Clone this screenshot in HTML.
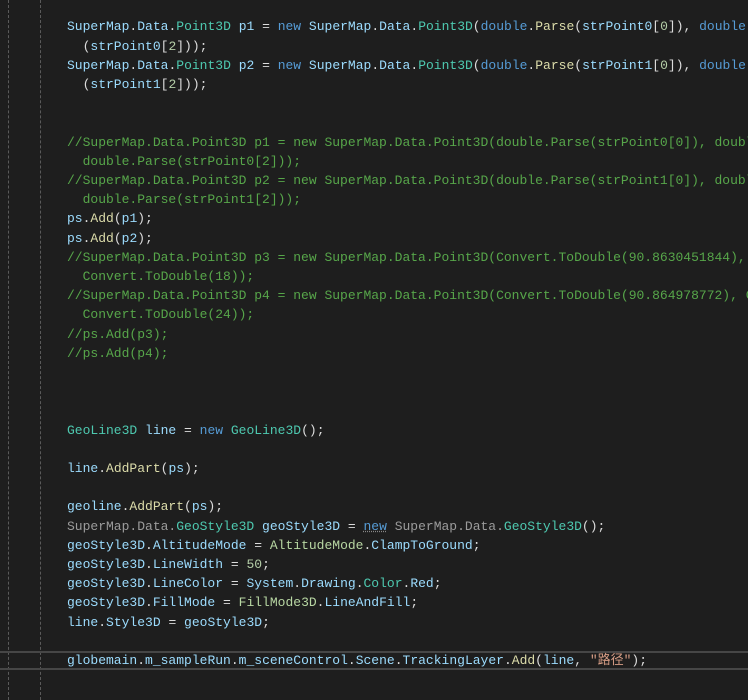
<!DOCTYPE html>
<html><head><meta charset="utf-8"><style>
html,body{margin:0;padding:0;background:#1e1e1e;width:748px;height:700px;overflow:hidden;position:relative}
.g{position:absolute;top:0;height:700px;width:0;border-left:1px dashed #5a5a5a}
.cur{position:absolute;left:0;width:748px;top:651px;height:15px;border-top:2px solid #464646;border-bottom:2px solid #464646}
.l{position:absolute;left:67px;width:681px;overflow:hidden;white-space:pre;font-family:"Liberation Mono","Noto Sans CJK SC",monospace;font-size:13px;line-height:19.2px;height:19.2px;color:#dcdcdc}
.v{color:#9cdcfe}.t{color:#4ec9b0}.k{color:#569cd6}.m{color:#dcdcaa}.c{color:#57a64a}.s{color:#d69d85}.n{color:#b5cea8}.d{color:#9b9b9b}.e{color:#b8d7a3}
</style></head><body>
<div class="g" style="left:8px"></div><div class="g" style="left:40px"></div>
<div class="cur"></div>
<div class="l" style="top:17.4px"><span class="v">SuperMap</span>.<span class="v">Data</span>.<span class="t">Point3D</span> <span class="v">p1</span> = <span class="k">new</span> <span class="v">SuperMap</span>.<span class="v">Data</span>.<span class="t">Point3D</span>(<span class="k">double</span>.<span class="m">Parse</span>(<span class="v">strPoint0</span>[<span class="n">0</span>]), <span class="k">double</span>.<span class="m">Parse</span></div>
<div class="l" style="top:36.6px">  (<span class="v">strPoint0</span>[<span class="n">2</span>]));</div>
<div class="l" style="top:55.8px"><span class="v">SuperMap</span>.<span class="v">Data</span>.<span class="t">Point3D</span> <span class="v">p2</span> = <span class="k">new</span> <span class="v">SuperMap</span>.<span class="v">Data</span>.<span class="t">Point3D</span>(<span class="k">double</span>.<span class="m">Parse</span>(<span class="v">strPoint1</span>[<span class="n">0</span>]), <span class="k">double</span>.<span class="m">Parse</span></div>
<div class="l" style="top:75px">  (<span class="v">strPoint1</span>[<span class="n">2</span>]));</div>
<div class="l c" style="top:132.6px">//SuperMap.Data.Point3D p1 = new SuperMap.Data.Point3D(double.Parse(strPoint0[0]), double.Parse</div>
<div class="l c" style="top:151.8px">  double.Parse(strPoint0[2]));</div>
<div class="l c" style="top:171px">//SuperMap.Data.Point3D p2 = new SuperMap.Data.Point3D(double.Parse(strPoint1[0]), double.Parse</div>
<div class="l c" style="top:190.2px">  double.Parse(strPoint1[2]));</div>
<div class="l" style="top:209.4px"><span class="v">ps</span>.<span class="m">Add</span>(<span class="v">p1</span>);</div>
<div class="l" style="top:228.6px"><span class="v">ps</span>.<span class="m">Add</span>(<span class="v">p2</span>);</div>
<div class="l c" style="top:247.8px">//SuperMap.Data.Point3D p3 = new SuperMap.Data.Point3D(Convert.ToDouble(90.8630451844), Conv</div>
<div class="l c" style="top:267px">  Convert.ToDouble(18));</div>
<div class="l c" style="top:286.2px">//SuperMap.Data.Point3D p4 = new SuperMap.Data.Point3D(Convert.ToDouble(90.864978772), Conv</div>
<div class="l c" style="top:305.4px">  Convert.ToDouble(24));</div>
<div class="l c" style="top:324.6px">//ps.Add(p3);</div>
<div class="l c" style="top:343.8px">//ps.Add(p4);</div>
<div class="l" style="top:420.6px"><span class="t">GeoLine3D</span> <span class="v">line</span> = <span class="k">new</span> <span class="t">GeoLine3D</span>();</div>
<div class="l" style="top:459px"><span class="v">line</span>.<span class="m">AddPart</span>(<span class="v">ps</span>);</div>
<div class="l" style="top:497.4px"><span class="v">geoline</span>.<span class="m">AddPart</span>(<span class="v">ps</span>);</div>
<div class="l" style="top:516.6px"><span class="d">SuperMap.Data.</span><span class="t">GeoStyle3D</span> <span class="v">geoStyle3D</span> = <span class="k" style="text-decoration:underline dotted #888">new</span> <span class="d">SuperMap.Data.</span><span class="t">GeoStyle3D</span>();</div>
<div class="l" style="top:535.8px"><span class="v">geoStyle3D</span>.<span class="v">AltitudeMode</span> = <span class="e">AltitudeMode</span>.<span class="v">ClampToGround</span>;</div>
<div class="l" style="top:555px"><span class="v">geoStyle3D</span>.<span class="v">LineWidth</span> = <span class="n">50</span>;</div>
<div class="l" style="top:574.2px"><span class="v">geoStyle3D</span>.<span class="v">LineColor</span> = <span class="v">System</span>.<span class="v">Drawing</span>.<span class="t">Color</span>.<span class="v">Red</span>;</div>
<div class="l" style="top:593.4px"><span class="v">geoStyle3D</span>.<span class="v">FillMode</span> = <span class="e">FillMode3D</span>.<span class="v">LineAndFill</span>;</div>
<div class="l" style="top:612.6px"><span class="v">line</span>.<span class="v">Style3D</span> = <span class="v">geoStyle3D</span>;</div>
<div class="l" style="top:651px"><span class="v">globemain</span>.<span class="v">m_sampleRun</span>.<span class="v">m_sceneControl</span>.<span class="v">Scene</span>.<span class="v">TrackingLayer</span>.<span class="m">Add</span>(<span class="v">line</span>, <span class="s">"路径"</span>);</div>
</body></html>
